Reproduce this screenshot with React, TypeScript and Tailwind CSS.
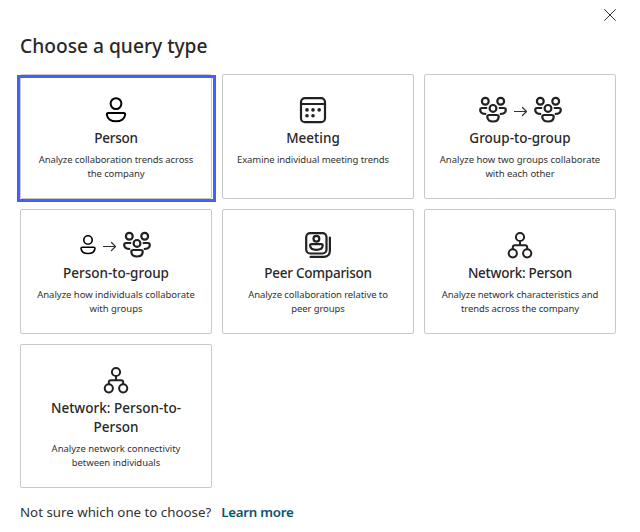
import type { ReactNode } from "react";

const stroke = {
  fill: "none",
  stroke: "#212121",
  strokeWidth: 2.2,
  strokeLinecap: "round",
  strokeLinejoin: "round",
} as const;

function PersonIcon() {
  return (
    <svg width="22" height="28" viewBox="0 0 22 28" {...stroke} stroke="#000" strokeWidth={2}>
      <circle cx="11" cy="7.600" r="5.400" />
      <path d="M3.300 17h15.400c1.200 0 1.500.7 1.400 1.600-.4 4.400-4.300 6.700-9.100 6.700s-8.700-2.300-9.100-6.700c-.1-.9.200-1.600 1.400-1.600Z" />
    </svg>
  );
}

function SmallPersonIcon() {
  return (
    <svg width="16" height="28" viewBox="0 0 16 28" {...stroke} stroke="#000" strokeWidth={1.600}>
      <circle cx="8" cy="9" r="4.200" />
      <path d="M2.200 16.300h11.600c.9 0 1.200.6 1.100 1.300-.3 3.400-3.200 4.900-6.900 4.900s-6.600-1.500-6.900-4.900c-.1-.7.200-1.300 1.100-1.300Z" />
    </svg>
  );
}

function CalendarIcon() {
  return (
    <svg width="28" height="28" viewBox="0 0 28 28" {...stroke} strokeWidth={2.200}>
      <rect x="2" y="2.200" width="24" height="24" rx="4" />
      <path d="M2 8h24" />
      <g fill="#212121" stroke="none">
        <circle cx="8" cy="13.900" r="1.800" />
        <circle cx="14" cy="13.900" r="1.800" />
        <circle cx="20.200" cy="13.900" r="1.800" />
        <circle cx="8" cy="19.700" r="1.800" />
        <circle cx="14" cy="19.700" r="1.800" />
      </g>
    </svg>
  );
}

function GroupIcon() {
  return (
    <svg width="28" height="28" viewBox="0 0 28 28" {...stroke} strokeLinecap="butt">
      <circle cx="6.300" cy="5.300" r="3.400" />
      <circle cx="21.700" cy="5.300" r="3.400" />
      <circle cx="14" cy="12.400" r="3.400" />
      <path d="M8.200 12H3.200c-1.400 0-2 .8-2 2 0 2.700 2.300 4 6 4" />
      <path d="M19.800 12h5c1.400 0 2 .8 2 2 0 2.700-2.300 4-6 4" />
      <path d="M10.300 19h7.400c1.500 0 2 .6 2 1.700 0 3.300-2.500 4.800-5.700 4.800s-5.700-1.500-5.700-4.800c0-1.100.5-1.700 2-1.700Z" />
    </svg>
  );
}

function ArrowIcon() {
  return (
    <svg width="13" height="28" viewBox="0 0 13 28" {...stroke} strokeWidth={1.200} stroke="#333">
      <path d="M.5 15.500h12M8.500 11.500l4 4-4 4" />
    </svg>
  );
}

function PeerIcon() {
  return (
    <svg width="28" height="28" viewBox="0 0 28 28" {...stroke}>
      <rect x="2.200" y="2.200" width="20.300" height="20.300" rx="4" />
      <path d="M25.900 6.600v13.100c0 3.800-2.500 6.200-6.200 6.200H6.600" />
      <circle cx="12.400" cy="7.800" r="2.900" />
      <path d="M7.600 13.200h9.600c1.100 0 1.600.6 1.500 1.500-.3 3.100-2.900 4.200-6.300 4.200s-6-1.100-6.300-4.200c-.1-.9.400-1.500 1.500-1.500Z" />
    </svg>
  );
}

function NetworkIcon() {
  return (
    <svg width="26" height="28" viewBox="0 0 26 28" {...stroke} strokeWidth={2}>
      <circle cx="13" cy="6" r="4.100" />
      <circle cx="5.800" cy="22.300" r="4.100" />
      <circle cx="20.200" cy="22.300" r="4.100" />
      <path d="M13 10.200v4M5.800 18v-1.500c0-1.500.7-2.200 2.200-2.200h10c1.500 0 2.200.7 2.200 2.200V18" />
    </svg>
  );
}

type CardProps = {
  icon: ReactNode;
  title: ReactNode;
  children: ReactNode;
  selected?: boolean;
  shifted?: boolean;
  tight?: boolean;
};

function QueryCard({ icon, title, children, selected, shifted, tight }: CardProps) {
  return (
    <button
      type="button"
      className={`relative flex flex-col items-center rounded-[2px] border border-[#c8c8c8] pt-[21px] text-center ${shifted ? "pr-[10px]" : ""}`}
    >
      <span className="flex h-7 items-center">{icon}</span>
      <span
        className={`mt-[5px] text-[13.5px] leading-[19px] font-medium whitespace-nowrap text-[#292827] ${tight ? "tracking-[-0.25px]" : ""}`}
      >
        {title}
      </span>
      <span
        className={`mt-[5px] text-[9.5px] leading-[14px] whitespace-nowrap text-[#323130] ${shifted || tight ? "tracking-[-0.09px]" : "tracking-[-0.03px]"}`}
      >
        {children}
      </span>
      {selected && (
        <span className="pointer-events-none absolute top-0 -right-[5px] -bottom-[4px] -left-[4px] border-[3px] border-[#4360fa]" />
      )}
    </button>
  );
}

export default function App() {
  return (
    <main className="relative h-[532px] w-[640px] overflow-hidden bg-white px-5 pt-8 font-['Noto_Sans','Open_Sans',sans-serif] text-[#323130]">
      <button type="button" aria-label="Close" className="absolute top-[9px] left-[604px]">
        <svg width="12" height="12" viewBox="0 0 12 12" stroke="#323130" strokeWidth="1">
          <path d="M.3.300l11.400 11.400M11.700.300L.3 11.700" />
        </svg>
      </button>
      <h1 className="text-[19.2px] leading-[27px] font-medium text-[#292827]">Choose a query type</h1>
      <div className="mt-[15px] grid grid-cols-[192px_192px_192px] grid-rows-[125px_125px_144px] gap-[10px]">
        <QueryCard selected tight icon={<PersonIcon />} title="Person">
          Analyze collaboration trends across
          <br />
          the company
        </QueryCard>
        <QueryCard shifted icon={<CalendarIcon />} title="Meeting">
          Examine individual meeting trends
        </QueryCard>
        <QueryCard
          icon={<span className="flex gap-[7px] pl-px"><GroupIcon /><ArrowIcon /><GroupIcon /></span>}
          title="Group-to-group"
        >
          Analyze how two groups collaborate
          <br />
          with each other
        </QueryCard>
        <QueryCard
          icon={<span className="flex gap-[7px] pr-px"><SmallPersonIcon /><ArrowIcon /><GroupIcon /></span>}
          title="Person-to-group"
        >
          Analyze how individuals collaborate
          <br />
          with groups
        </QueryCard>
        <QueryCard tight icon={<PeerIcon />} title="Peer Comparison">
          Analyze collaboration relative to
          <br />
          peer groups
        </QueryCard>
        <QueryCard tight icon={<NetworkIcon />} title="Network: Person">
          Analyze network characteristics and
          <br />
          trends across the company
        </QueryCard>
        <QueryCard
          icon={<NetworkIcon />}
          title={<>Network: Person-to-<br />Person</>}
        >
          Analyze network connectivity
          <br />
          between individuals
        </QueryCard>
      </div>
      <div className="mt-[14px] flex gap-[10px] text-[13.3px] leading-5 whitespace-nowrap">
        <span>Not sure which one to choose?</span>
        <a href="#" className="font-semibold tracking-[-0.25px] text-[#0b556a]">Learn more</a>
      </div>
    </main>
  );
}
